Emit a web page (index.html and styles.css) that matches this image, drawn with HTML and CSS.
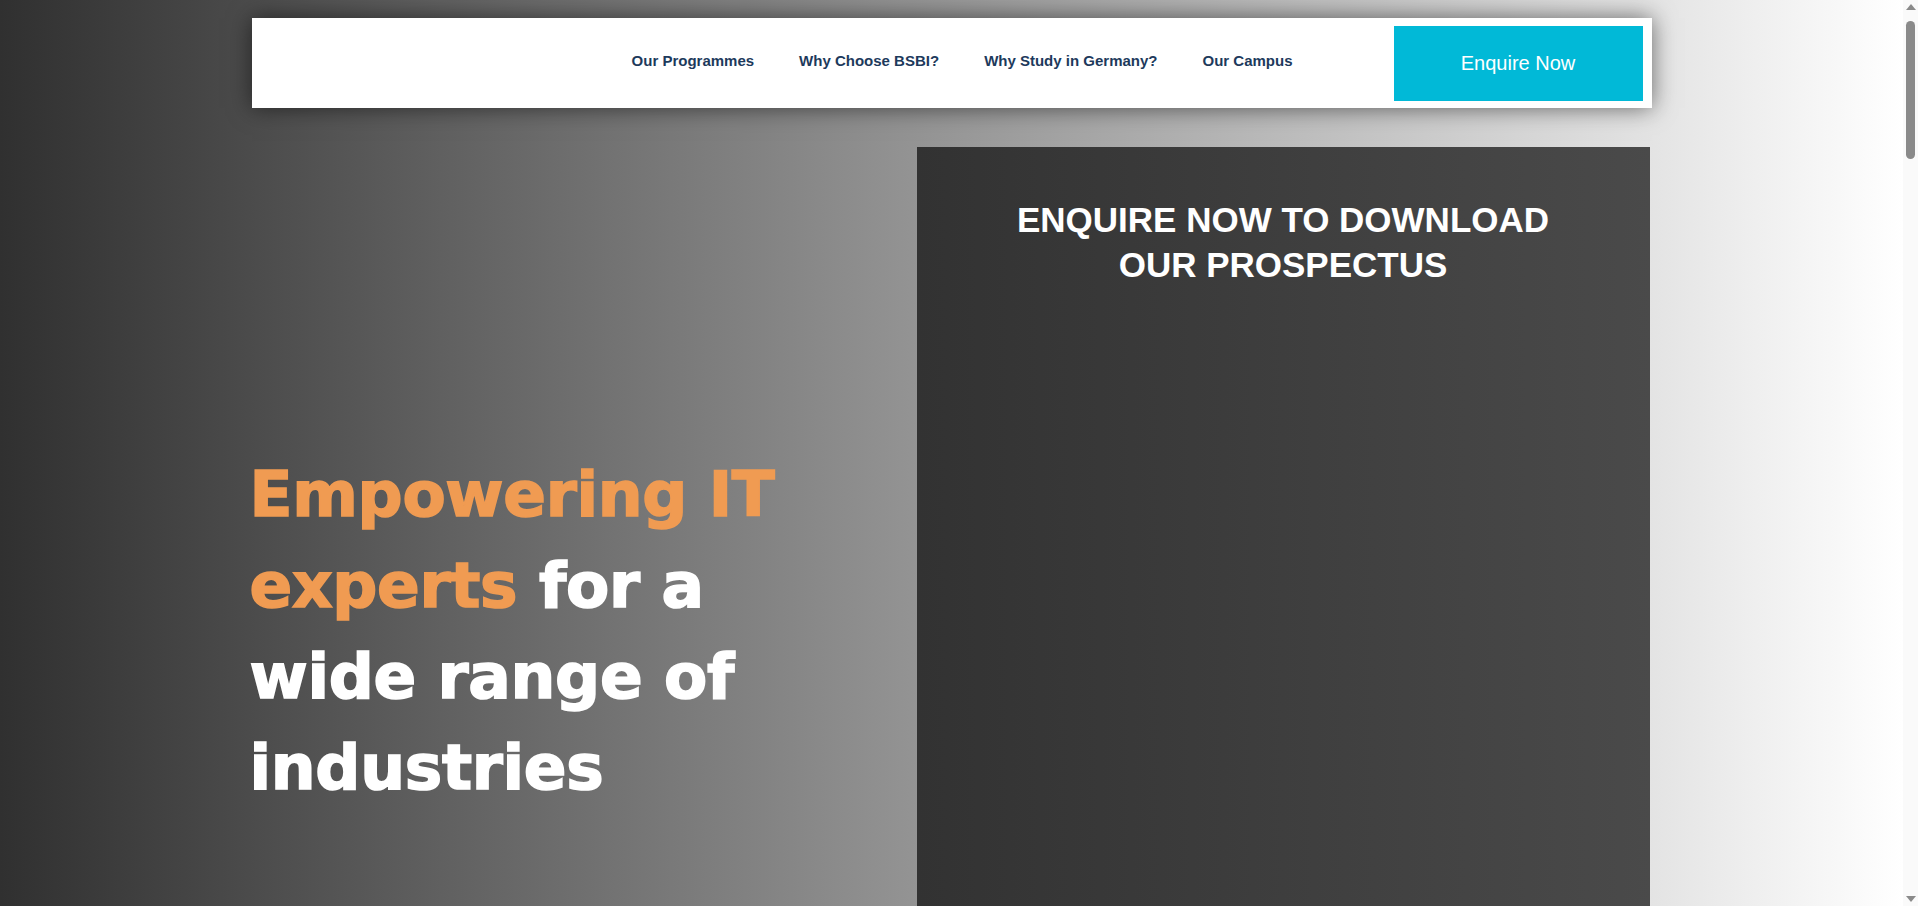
FILE: index.html
```html
<!DOCTYPE html>
<html lang="en">
<head>
<meta charset="utf-8">
<title>BSBI – Empowering IT experts</title>
<link rel="stylesheet" href="styles.css">
</head>
<body>
  <div class="page">
    <header class="site-header">
      <nav class="main-nav">
        <a class="nav-link" href="#programmes">Our Programmes</a>
        <a class="nav-link" href="#why-bsbi">Why Choose BSBI?</a>
        <a class="nav-link" href="#germany">Why Study in Germany?</a>
        <a class="nav-link" href="#campus">Our Campus</a>
      </nav>
      <a class="enquire-btn" href="#enquire">Enquire Now</a>
    </header>

    <section class="hero">
      <div class="hero-text">
        <h1 class="hero-title"><span class="accent">Empowering IT experts</span> for a wide range of industries</h1>
      </div>
      <aside class="enquire-card" id="enquire">
        <h2 class="card-title">ENQUIRE NOW TO DOWNLOAD OUR PROSPECTUS</h2>
        <div class="form-area"></div>
      </aside>
    </section>

    <section class="more" id="programmes"></section>
  </div>

  <div class="scrollbar" aria-hidden="true">
    <span class="sb-arrow sb-up"></span>
    <span class="sb-thumb"></span>
    <span class="sb-arrow sb-down"></span>
  </div>
</body>
</html>
```
FILE: styles.css
```css
* {
  box-sizing: border-box;
}

html, body {
  margin: 0;
  padding: 0;
}

body {
  background: #fafafa;
  font-family: "Liberation Sans", Arial, sans-serif;
}

.page {
  margin-right: 15px;
  padding-top: 18px;
  background: linear-gradient(90deg, #303030 0%, #ffffff 100%);
}

.site-header {
  width: 1400px;
  height: 90px;
  margin: 0 auto;
  padding: 8px 9px 7px 8px;
  background: #ffffff;
  box-shadow: 0 0 22px rgba(0, 0, 0, 0.55);
  display: flex;
  align-items: center;
  justify-content: flex-end;
}

.main-nav {
  display: flex;
  align-items: center;
  gap: 45px;
  margin-right: 101px;
  padding-bottom: 7px;
}

.nav-link {
  font-size: 15px;
  font-weight: 700;
  color: #1d3a5c;
  text-decoration: none;
  white-space: nowrap;
}

.enquire-btn {
  width: 249px;
  height: 75px;
  display: flex;
  align-items: center;
  justify-content: center;
  background: #01b9d7;
  color: #ffffff;
  font-size: 20px;
  text-decoration: none;
}

.hero {
  width: 1400px;
  margin: 39px auto 0;
  display: flex;
  align-items: flex-start;
}

.hero-text {
  width: 665px;
  padding-top: 302px;
}

.hero-title {
  width: 600px;
  margin: 0 0 0 -2px;
  font-family: "DejaVu Sans", "Liberation Sans", sans-serif;
  font-weight: 700;
  font-size: 63px;
  line-height: 91px;
  letter-spacing: -0.3px;
  color: #ffffff;
  -webkit-text-stroke: 1.6px currentColor;
}

.accent {
  color: #f09b52;
}

.enquire-card {
  width: 733px;
  min-height: 1000px;
  padding: 50px 70px 0;
  background: linear-gradient(90deg, #323232 0%, #4a4a4a 100%);
}

.card-title {
  margin: 0;
  text-align: center;
  color: #ffffff;
  font-size: 35px;
  line-height: 45px;
  font-weight: 700;
}

.form-area {
  height: 600px;
}

.more {
  height: 4620px;
}

/* drawn browser scrollbar, lying over the page's right edge */
.scrollbar {
  position: fixed;
  top: 0;
  right: 0;
  width: 15px;
  height: 100vh;
  background: #fafafa;
}

.sb-arrow {
  position: absolute;
  left: 3px;
  width: 0;
  height: 0;
  border-left: 5px solid transparent;
  border-right: 5px solid transparent;
}

.sb-up {
  top: 4px;
  border-bottom: 6px solid #8a8a8a;
}

.sb-down {
  bottom: 4px;
  border-top: 6px solid #8a8a8a;
}

.sb-thumb {
  position: absolute;
  top: 21px;
  left: 3px;
  width: 9px;
  height: 138px;
  border-radius: 5px;
  background: #8a8a8a;
}
```
